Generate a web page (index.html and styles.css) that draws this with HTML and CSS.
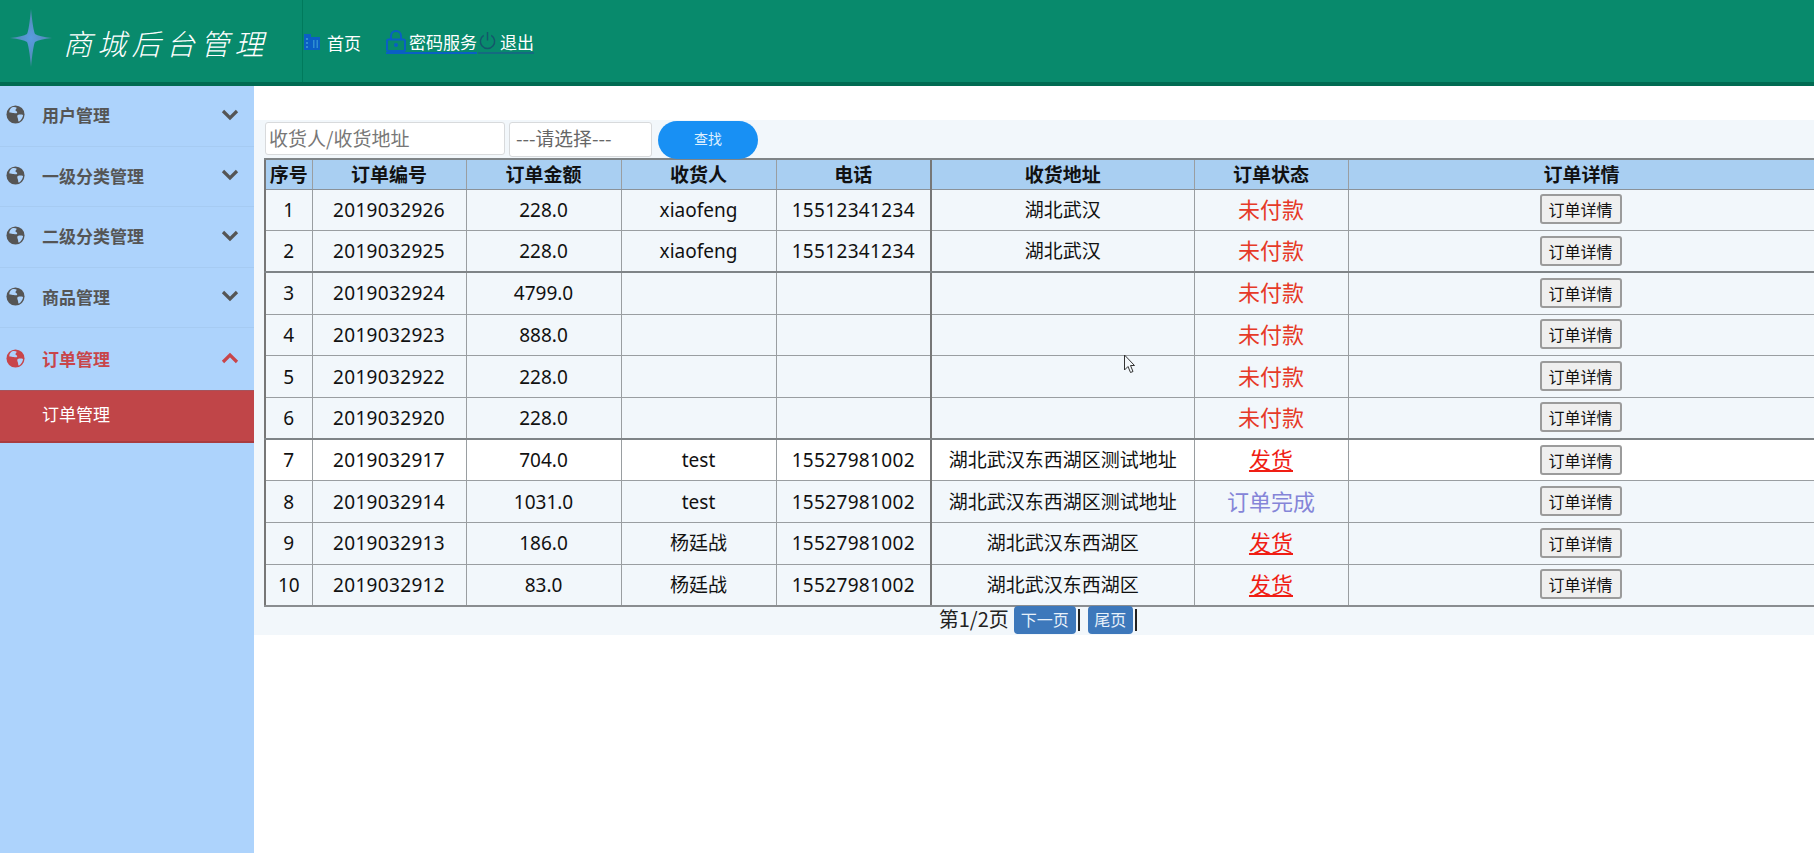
FILE: index.html
```html
<!DOCTYPE html>
<html lang="zh-CN">
<head>
<meta charset="utf-8">
<title>商城后台管理</title>
<link rel="stylesheet" href="styles.css">
</head>
<body>
<svg class="sprite" width="0" height="0" aria-hidden="true">
  <defs>
    <symbol id="globe" viewBox="0 0 20 20">
      <circle cx="10" cy="10" r="9.500" fill="currentColor"/>
      <path d="M6 2.500c2-.8 4-.6 5 .2.6 1-.8 1.400-1 2.600-.3 1.200 1.600 1 1.800 2.200.1 1.300-2 1.600-3.400 1C7 8 5 8 3.600 7.800 3 6 4.500 3.500 6 2.500zM12.500 10.500c1.500-.5 3.500-.5 5.500 0-.3 3-2 5.500-4.500 7-.9-.8-.6-2-1-3.200-.4-1.300-1.200-3.300 0-3.800z" fill="#add3fc"/>
    </symbol>
    <radialGradient id="starfill" cx="50%" cy="50%" r="55%">
      <stop offset="0" stop-color="#5a9be0"/>
      <stop offset="1" stop-color="#4f86a8"/>
    </radialGradient>
  </defs>
</svg>
<header class="topbar">
  <div class="brand">
    <svg class="star" viewBox="0 0 42 58" width="42" height="58" aria-hidden="true">
      <path d="M21 0 Q23 21 25 25 Q29 27.500 42 29 Q29 30.500 25 33 Q23 37 21 58 Q19 37 17 33 Q13 30.500 0 29 Q13 27.500 17 25 Q19 21 21 0 Z" fill="url(#starfill)"/>
    </svg>
    <span class="brand-name">商城后台管理</span>
  </div>
  <nav class="nav">
    <a class="nav-link nav-home" href="#">
      <svg class="nav-icon" viewBox="0 0 16 16" width="16" height="16" aria-hidden="true"><path d="M0 0h7v3h9v13H0z" fill="#0a5fc4"/><path d="M2 4h2v2H2zM2 8h2v2H2zM2 12h2v2H2zM9 6h1.500v8H9zM12.500 6H14v8h-1.500z" fill="#2f8fd0"/></svg>
      <span>首页</span>
    </a>
    <a class="nav-link nav-pass" href="#">
      <svg class="nav-icon" viewBox="0 0 20 22" width="20" height="22" aria-hidden="true"><path d="M5 10V6a5 5 0 0 1 10 0v4" fill="none" stroke="#0a5fc4" stroke-width="2"/><rect x="1" y="9.500" width="18" height="11.500" rx="1.500" fill="none" stroke="#0a5fc4" stroke-width="2"/><circle cx="10" cy="15" r="2" fill="#0a5fc4"/></svg>
      <span>密码服务</span>
    </a>
    <a class="nav-link nav-exit" href="#">
      <svg class="nav-icon" viewBox="0 0 20 20" width="19" height="19" aria-hidden="true"><path d="M6 3.500a7.500 7.500 0 1 0 8 0" fill="none" stroke="#14566b" stroke-width="1.500"/><path d="M10 0v9" stroke="#14566b" stroke-width="1.500"/></svg>
      <span>退出</span>
    </a>
  </nav>
</header>
<div class="layout">
  <aside class="sidebar">
    <div class="menu-item"><svg class="globe"><use href="#globe"/></svg><span class="menu-text">用户管理</span><svg class="chev" viewBox="0 0 18 12"><path d="M2 2l7 7 7-7" fill="none" stroke="currentColor" stroke-width="3.200"/></svg></div>
    <div class="menu-item"><svg class="globe"><use href="#globe"/></svg><span class="menu-text">一级分类管理</span><svg class="chev" viewBox="0 0 18 12"><path d="M2 2l7 7 7-7" fill="none" stroke="currentColor" stroke-width="3.200"/></svg></div>
    <div class="menu-item"><svg class="globe"><use href="#globe"/></svg><span class="menu-text">二级分类管理</span><svg class="chev" viewBox="0 0 18 12"><path d="M2 2l7 7 7-7" fill="none" stroke="currentColor" stroke-width="3.200"/></svg></div>
    <div class="menu-item"><svg class="globe"><use href="#globe"/></svg><span class="menu-text">商品管理</span><svg class="chev" viewBox="0 0 18 12"><path d="M2 2l7 7 7-7" fill="none" stroke="currentColor" stroke-width="3.200"/></svg></div>
    <div class="menu-item menu-active"><svg class="globe"><use href="#globe"/></svg><span class="menu-text">订单管理</span><svg class="chev" viewBox="0 0 18 12"><path d="M2 10l7-7 7 7" fill="none" stroke="currentColor" stroke-width="3.200"/></svg></div>
    <div class="submenu-item">订单管理</div>
  </aside>
  <main class="content">
    <div class="panel">
      <form class="search">
        <input class="search-input" type="text" placeholder="收货人/收货地址">
        <div class="search-select">---请选择---</div>
        <button class="search-btn" type="button">查找</button>
      </form>
      <table class="orders">
        <colgroup>
          <col class="c1"><col class="c2"><col class="c3"><col class="c4"><col class="c5"><col class="c6"><col class="c7"><col class="c8">
        </colgroup>
        <thead>
          <tr><th>序号</th><th>订单编号</th><th>订单金额</th><th>收货人</th><th>电话</th><th class="vgroup">收货地址</th><th>订单状态</th><th>订单详情</th></tr>
        </thead>
        <tbody>
          <tr><td>1</td><td>2019032926</td><td>228.0</td><td>xiaofeng</td><td>15512341234</td><td class="vgroup">湖北武汉</td><td class="st-unpaid">未付款</td><td><button class="detail" type="button">订单详情</button></td></tr>
          <tr class="group-end"><td>2</td><td>2019032925</td><td>228.0</td><td>xiaofeng</td><td>15512341234</td><td class="vgroup">湖北武汉</td><td class="st-unpaid">未付款</td><td><button class="detail" type="button">订单详情</button></td></tr>
          <tr><td>3</td><td>2019032924</td><td>4799.0</td><td></td><td></td><td class="vgroup"></td><td class="st-unpaid">未付款</td><td><button class="detail" type="button">订单详情</button></td></tr>
          <tr><td>4</td><td>2019032923</td><td>888.0</td><td></td><td></td><td class="vgroup"></td><td class="st-unpaid">未付款</td><td><button class="detail" type="button">订单详情</button></td></tr>
          <tr><td>5</td><td>2019032922</td><td>228.0</td><td></td><td></td><td class="vgroup"></td><td class="st-unpaid">未付款</td><td><button class="detail" type="button">订单详情</button></td></tr>
          <tr class="group-end"><td>6</td><td>2019032920</td><td>228.0</td><td></td><td></td><td class="vgroup"></td><td class="st-unpaid">未付款</td><td><button class="detail" type="button">订单详情</button></td></tr>
          <tr class="row-hover"><td>7</td><td>2019032917</td><td>704.0</td><td>test</td><td>15527981002</td><td class="vgroup">湖北武汉东西湖区测试地址</td><td class="st-ship"><a href="#">发货</a></td><td><button class="detail" type="button">订单详情</button></td></tr>
          <tr><td>8</td><td>2019032914</td><td>1031.0</td><td>test</td><td>15527981002</td><td class="vgroup">湖北武汉东西湖区测试地址</td><td class="st-done">订单完成</td><td><button class="detail" type="button">订单详情</button></td></tr>
          <tr><td>9</td><td>2019032913</td><td>186.0</td><td>杨廷战</td><td>15527981002</td><td class="vgroup">湖北武汉东西湖区</td><td class="st-ship"><a href="#">发货</a></td><td><button class="detail" type="button">订单详情</button></td></tr>
          <tr><td>10</td><td>2019032912</td><td>83.0</td><td>杨廷战</td><td>15527981002</td><td class="vgroup">湖北武汉东西湖区</td><td class="st-ship"><a href="#">发货</a></td><td><button class="detail" type="button">订单详情</button></td></tr>
        </tbody>
      </table>
      <div class="pager">
        <span class="page-info">第1/2页</span>
        <a class="page-btn page-next" href="#">下一页</a><span class="page-sep"></span>
        <a class="page-btn page-last" href="#">尾页</a><span class="page-sep"></span>
      </div>
    </div>
    <svg class="cursor" viewBox="0 0 12 20" width="13" height="20" aria-hidden="true"><path d="M1 1v15l3.500-3.500 2.500 6 2.500-1-2.500-6H11z" fill="#f4f8fb" stroke="#333" stroke-width="1"/></svg>
  </main>
</div>
</body>
</html>
```
FILE: styles.css
```css
* { box-sizing: border-box; }
html, body { margin: 0; height: 100%; }
body {
  font-family: "Noto Sans", "Noto Sans CJK SC", sans-serif;
  background: #fff;
  color: #111;
  overflow: hidden;
}
.sprite { position: absolute; }
a { color: inherit; text-decoration: none; }

.topbar {
  display: flex;
  height: 86px;
  background: #088a6c;
  border-bottom: 4px solid #006b52;
}
.brand {
  width: 303px;
  display: flex;
  align-items: center;
  padding-left: 10px;
  gap: 11px;
  border-right: 1px solid #007a5c;
}
.star { flex: none; margin-top: -6px; }
.brand-name {
  color: #fff;
  font-family: "Noto Sans CJK SC", sans-serif;
  font-size: 29px;
  font-weight: 300;
  font-style: italic;
  letter-spacing: 5.300px;
  line-height: 1;
  white-space: nowrap;
  margin-top: 2px;
}
.nav {
  display: flex;
  align-items: center;
  color: #fff;
  font-size: 17px;
  font-family: "Noto Sans CJK SC", sans-serif;
  padding-left: 1px;
  padding-top: 2px;
  white-space: nowrap;
}
.nav-link { display: flex; align-items: center; gap: 6px; height: 24px; }
.nav-home { margin-right: 25px; gap: 7px; }
.nav-pass { gap: 3px; border-bottom: 2px solid #0a5fc4; }
.nav-exit { gap: 3px; border-bottom: 2px solid #146a80; margin-left: 1px; }

.layout {
  display: flex;
  height: 767px;
}
.sidebar {
  width: 254px;
  flex: none;
  background: #add3fc;
}
.menu-item {
  height: 60.500px;
  display: flex;
  align-items: center;
  padding: 0 15px 2px 6px;
  color: #555;
  font-size: 17px;
  font-weight: 700;
  font-family: "Noto Sans CJK SC", sans-serif;
  border-bottom: 1px solid #a6cbf2;
}
.globe { width: 19px; height: 19px; flex: none; margin-right: 17px; }
.menu-text { flex: 1; }
.chev { width: 18px; height: 12px; flex: none; }
.menu-active { color: #c8454a; height: 62px; border-bottom: 0; }
.submenu-item {
  height: 53px;
  padding: 0 0 5px 42px;
  display: flex;
  align-items: center;
  background: #c04548;
  color: #fff;
  font-size: 17px;
  font-family: "Noto Sans CJK SC", sans-serif;
  border-bottom: 2px solid #a93c40;
  border-top: 1px solid #a5545c;
}

.content {
  flex: 1;
  padding-top: 34px;
  position: relative;
}
.panel {
  background: #f2f7fb;
  padding-left: 10px;
  height: 515px;
}
.search {
  height: 38px;
  display: flex;
  align-items: flex-start;
}
.search-input {
  width: 240px;
  height: 33px;
  margin: 2px 0 0 1px;
  padding: 0 3px 3px;
  border: 1px solid #d8dadc;
  border-radius: 3px;
  background: #fff;
  font: 19px "Noto Sans CJK SC", sans-serif;
  color: #333;
}
.search-input::placeholder { color: #777; opacity: 1; }
.search-select {
  width: 143px;
  height: 35px;
  margin: 2px 6px 0 4px;
  padding-left: 6px;
  border: 1px solid #d8dadc;
  border-radius: 3px;
  background: #fff;
  font: 18.800px/30px "Noto Sans CJK SC", sans-serif;
  color: #666;
}
.search-btn {
  width: 100px;
  height: 38px;
  margin-top: 1px;
  padding-bottom: 5px;
  border: 0;
  border-radius: 19px;
  background: #1890f4;
  color: #dff0ff;
  font: 14px "Noto Sans CJK SC", sans-serif;
}

.orders {
  table-layout: fixed;
  width: 1550px;
  border-collapse: collapse;
  font-size: 19px;
  text-align: center;
}
.c1 { width: 47px; }
.c2 { width: 154px; }
.c3 { width: 155px; }
.c4 { width: 155px; }
.c5 { width: 155px; }
.c6 { width: 263px; }
.c7 { width: 154px; }
.c8 { width: 467px; }
.orders th, .orders td {
  border: 1px solid #9a9ea1;
  padding: 0;
  white-space: nowrap;
  overflow: hidden;
}
.orders th {
  height: 30px;
  background: #a9cff2;
  font-weight: 700;
  font-size: 19px;
  line-height: 28px;
  color: #111;
  border-top: 2px solid #7f8487;
  border-bottom: 1px solid #8b9299;
  font-family: "Noto Sans CJK SC", sans-serif;
}
.orders td { height: 41.700px; line-height: 26px; }
.orders td:nth-child(2), .orders td:nth-child(5) { letter-spacing: .33px; }
.orders tr > :first-child { border-left: 2px solid #777; }
.orders tbody tr:last-child td { border-bottom: 2px solid #8a8d90; }
.orders .group-end td { border-bottom: 2px solid #7f8487; }
.orders .vgroup { border-left: 2px solid #777; }
.row-hover td { background: #fff; }
.orders .st-unpaid, .orders .st-ship, .orders .st-done { font-size: 22px; padding-bottom: 2px; }
.st-unpaid { color: #e63a28; }
.st-ship a { color: #f01e14; text-decoration: underline; }
.st-done { color: #8585d8; }
.detail {
  width: 82px;
  height: 30px;
  padding: 0;
  margin: -2px 2px 0 0;
  border: 2px solid #9b9b9b;
  border-radius: 3px;
  background: #efefef;
  color: #111;
  font: 16px "Noto Sans CJK SC", sans-serif;
  vertical-align: middle;
}

.pager {
  display: flex;
  justify-content: center;
  align-items: center;
  height: 28px;
  margin-top: -1px;
  font-size: 20px;
  font-family: "Noto Sans CJK SC", sans-serif;
  color: #222;
  padding-left: 4px;
}
.page-info { margin-right: 5px; padding-bottom: 2px; }
.page-btn {
  height: 28px;
  background: #3d78bb;
  color: #e8f1fa;
  font-size: 16px;
  line-height: 26px;
  border-radius: 4px;
  text-align: center;
}
.page-next { width: 62px; }
.page-last { width: 45px; }
.page-sep {
  width: 2px;
  height: 22px;
  background: #222;
  margin: 0 8px 0 2px;
}
.cursor {
  position: absolute;
  left: 869px;
  top: 268px;
}
```
